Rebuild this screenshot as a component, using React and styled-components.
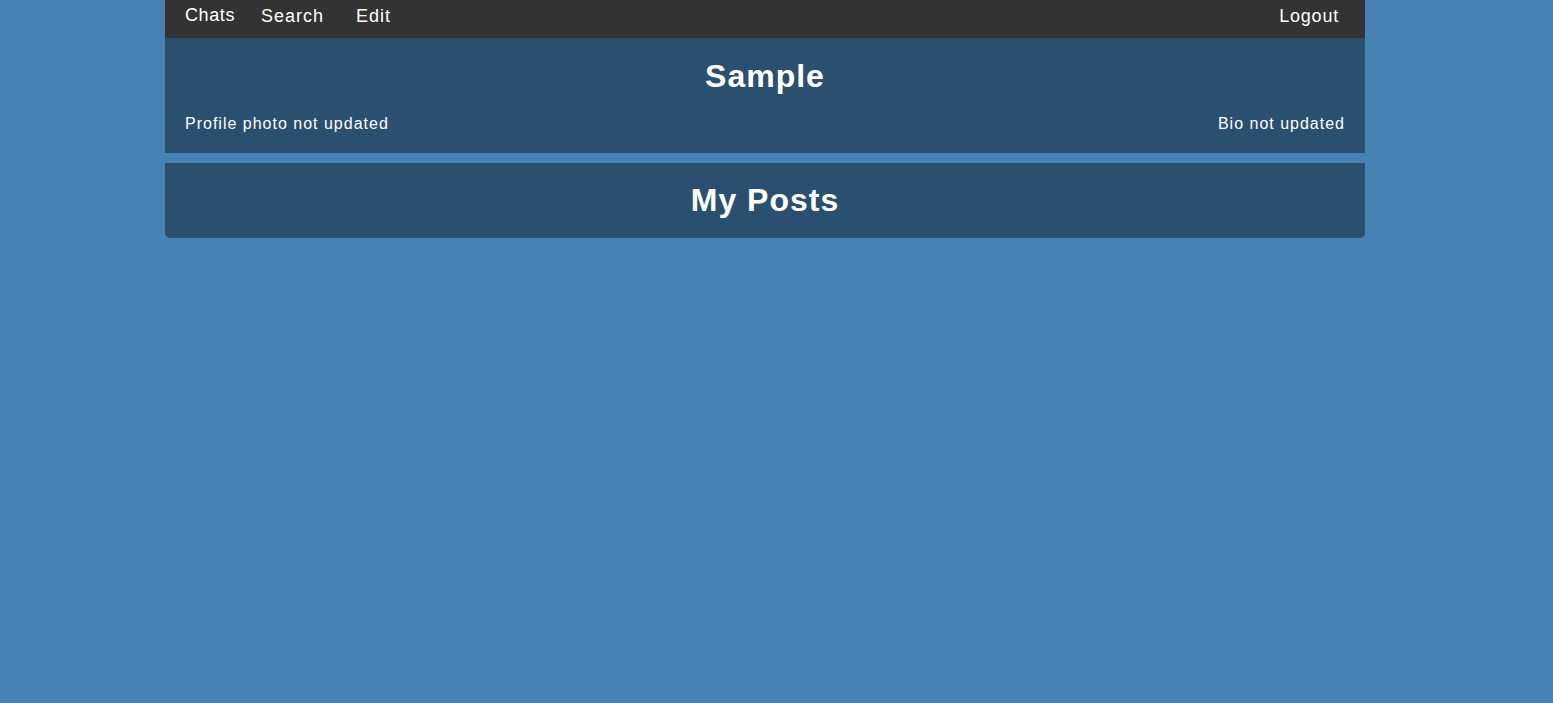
import React from "react";
import styled, { createGlobalStyle } from "styled-components";

const GlobalStyle = createGlobalStyle`
  body {
    margin: 0;
    background: #4682b4;
    font-family: "Liberation Sans", Arial, sans-serif;
    color: #fff;
  }
`;

export default function App() {
  return (
    <>
      <GlobalStyle />
      <Page>
        <Nav>
          <NavLinks>
            <NavLink $raise $spacing={0.6}>Chats</NavLink>
            <NavLink $gap={26}>Search</NavLink>
            <NavLink $gap={32}>Edit</NavLink>
          </NavLinks>
          <NavLink $spacing={0.8}>Logout</NavLink>
        </Nav>
        <Profile>
          <Title>Sample</Title>
          <InfoRow>
            <span>Profile photo not updated</span>
            <span>Bio not updated</span>
          </InfoRow>
        </Profile>
        <Posts>
          <Title>My Posts</Title>
        </Posts>
      </Page>
    </>
  );
}

const Page = styled.div`
  width: 1200px;
  margin-left: 165px;
  display: flex;
  flex-direction: column;
`;

const Nav = styled.nav`
  height: 38px;
  box-sizing: border-box;
  background: #333333;
  display: flex;
  align-items: center;
  justify-content: space-between;
  padding: 0 26px 6px 20px;
`;

const NavLinks = styled.div`
  display: flex;
  align-items: center;
`;

const NavLink = styled.a`
  font-size: 18px;
  letter-spacing: ${(p) => (p.$spacing != null ? p.$spacing : 1)}px;
  color: #fff;
  cursor: pointer;
  margin-left: ${(p) => (p.$gap ? p.$gap : 0)}px;
  position: relative;
  top: ${(p) => (p.$raise ? "-1px" : "0")};
`;

const Profile = styled.section`
  background: #2b4f6e;
  padding: 20px 20px 20px;
`;

const Title = styled.h1`
  margin: 0;
  text-align: center;
  font-size: 32px;
  line-height: 37px;
  font-weight: bold;
  letter-spacing: 1px;
`;

const InfoRow = styled.div`
  margin-top: 20px;
  display: flex;
  justify-content: space-between;
  font-size: 16px;
  line-height: 18px;
  letter-spacing: 1px;
`;

const Posts = styled.section`
  margin-top: 10px;
  background: #2b4f6e;
  padding: 19px 20px 19px;
  border-radius: 0 0 5px 5px;
`;
